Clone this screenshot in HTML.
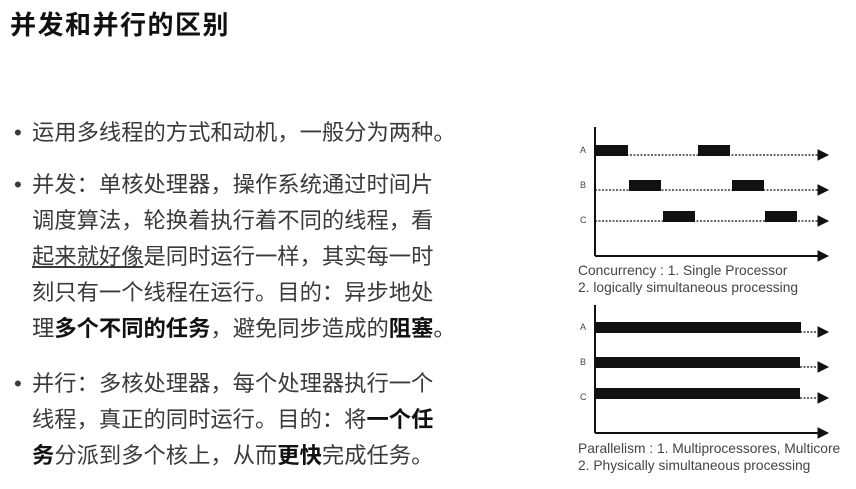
<!DOCTYPE html>
<html><head><meta charset="utf-8"><style>
body{margin:0;width:856px;height:489px;background:#fff;overflow:hidden;position:relative;font-family:"Liberation Sans","Noto Sans CJK SC",sans-serif;}
h1{position:absolute;left:10px;top:5px;margin:0;font-size:26px;font-weight:bold;color:#111;letter-spacing:1.5px;}
.t{position:absolute;left:14px;font-size:22.3px;color:#3a3a3a;line-height:36px;white-space:nowrap;}
.t b{color:#111}
.dot{display:inline-block;width:18px;}
.ind{padding-left:18px}
.cap{position:absolute;left:578px;font-size:13.8px;color:#444;line-height:17px;white-space:nowrap;}
</style></head><body>
<h1>并发和并行的区别</h1>
<div class="t" style="top:115px"><span class="dot">•</span>运用多线程的方式和动机，一般分为两种。</div>
<div class="t" style="top:167px"><span class="dot">•</span>并发：单核处理器，操作系统通过时间片<br><span class="ind">调度算法，轮换着执行着不同的线程，看</span><br><span class="ind"><u>起来就好像</u>是同时运行一样，其实每一时</span><br><span class="ind">刻只有一个线程在运行。目的：异步地处</span><br><span class="ind">理<b>多个不同的任务</b>，避免同步造成的<b>阻塞</b>。</span></div>
<div class="t" style="top:366px"><span class="dot">•</span>并行：多核处理器，每个处理器执行一个<br><span class="ind">线程，真正的同时运行。目的：将<b>一个任</b></span><br><span class="ind"><b>务</b>分派到多个核上，从而<b>更快</b>完成任务。</span></div>
<svg style="position:absolute;left:0;top:0" width="856" height="489">
<g fill="#111" stroke="#111">
<line x1="595" y1="127" x2="595" y2="256" stroke-width="2"/>
<line x1="595" y1="256" x2="822" y2="256" stroke-width="2"/>
<polygon points="818,251 828,256 818,261"/>
<g stroke-dasharray="2,1.5" stroke-width="1.3">
<line x1="595" y1="155" x2="822" y2="155"/>
<line x1="595" y1="190" x2="822" y2="190"/>
<line x1="595" y1="221" x2="822" y2="221"/>
</g>
<polygon points="818,150 828,155 818,160"/>
<polygon points="818,185 828,190 818,195"/>
<polygon points="818,216 828,221 818,226"/>
<g stroke="none">
<rect x="595" y="145" width="33" height="11"/><rect x="698" y="145" width="32" height="11"/>
<rect x="629" y="180" width="32" height="11"/><rect x="732" y="180" width="32" height="11"/>
<rect x="663" y="211" width="32" height="11"/><rect x="765" y="211" width="32" height="11"/>
</g>
<line x1="595" y1="305" x2="595" y2="433" stroke-width="2"/>
<line x1="595" y1="433" x2="822" y2="433" stroke-width="2"/>
<polygon points="818,428 828,433 818,438"/>
<g stroke-dasharray="2,1.5" stroke-width="1.3">
<line x1="800" y1="332" x2="822" y2="332"/>
<line x1="800" y1="367" x2="822" y2="367"/>
<line x1="800" y1="398" x2="822" y2="398"/>
</g>
<polygon points="818,327 828,332 818,337"/>
<polygon points="818,362 828,367 818,372"/>
<polygon points="818,393 828,398 818,403"/>
<g stroke="none">
<rect x="595" y="322" width="206" height="11"/>
<rect x="595" y="357" width="205" height="11"/>
<rect x="595" y="388" width="205" height="11"/>
</g>
</g>
<g font-family="Liberation Sans, sans-serif" font-size="9" fill="#444">
<text x="580" y="153">A</text><text x="580" y="188">B</text><text x="580" y="223">C</text>
<text x="580" y="330">A</text><text x="580" y="365">B</text><text x="580" y="400">C</text>
</g>
</svg>
<div class="cap" style="top:262px">Concurrency : 1. Single Processor<br>2. logically simultaneous processing</div>
<div class="cap" style="top:440px">Parallelism : 1. Multiprocessores, Multicore<br>2. Physically simultaneous processing</div>
</body></html>
